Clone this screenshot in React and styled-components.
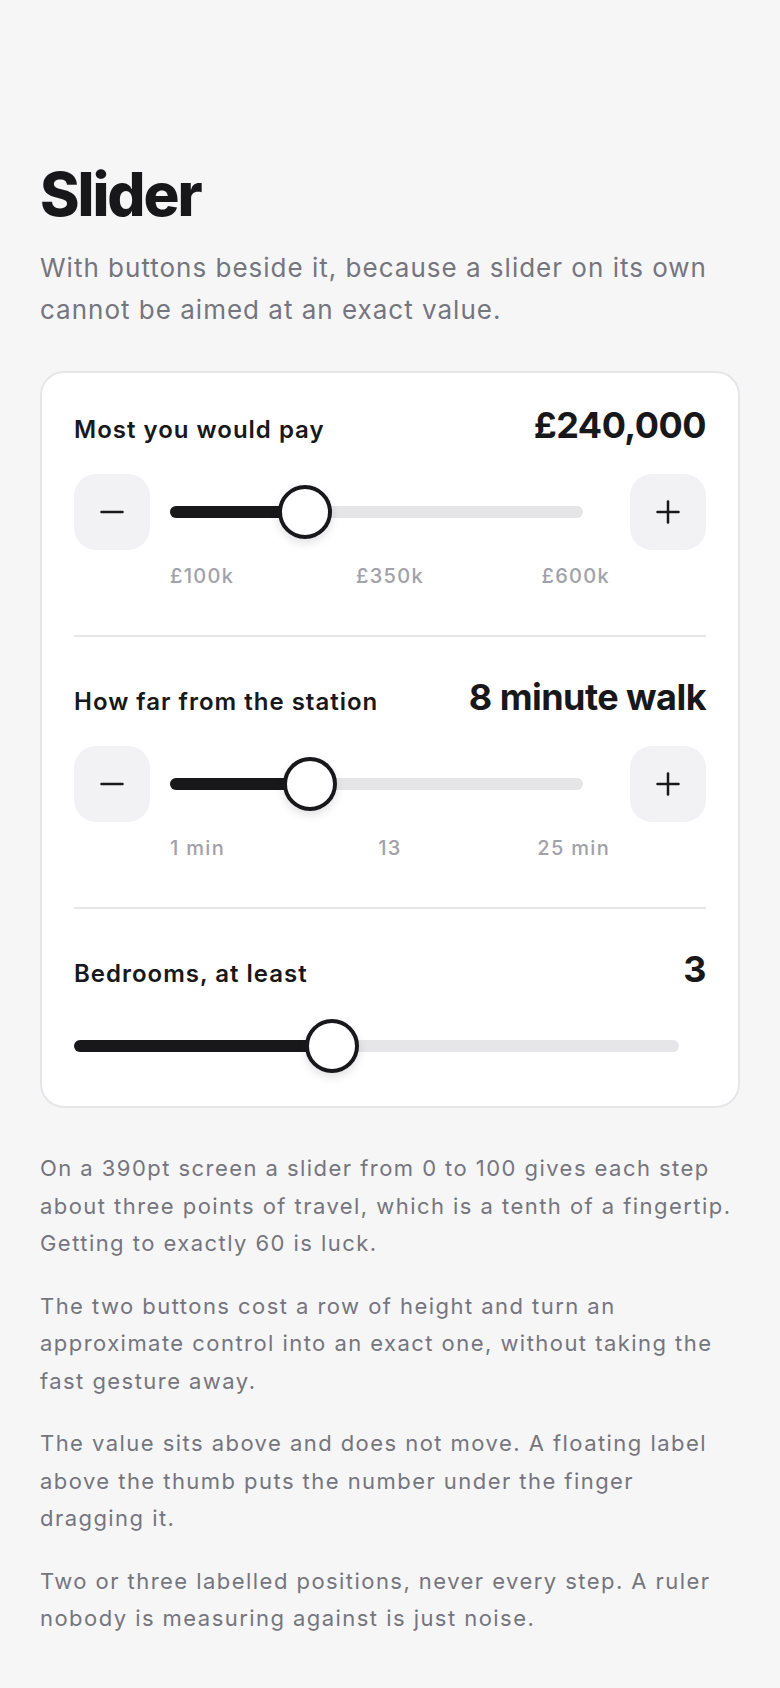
import React from "react";
import styled, { createGlobalStyle } from "styled-components";

const GlobalStyle = createGlobalStyle`
  html, body {
    margin: 0;
    padding: 0;
    background: #f6f6f7;
  }
  body {
    font-family: Inter, "Noto Sans", sans-serif;
    color: #18181b;
    -webkit-font-smoothing: antialiased;
  }
  * {
    box-sizing: border-box;
  }
`;

const Page = styled.main`
  padding: 161px 40px 50px;
`;

const Title = styled.h1`
  margin: 0;
  font-size: 60px;
  line-height: 66px;
  font-weight: 800;
  letter-spacing: -0.035em;
  color: #18181b;
`;

const Lead = styled.p`
  margin: 20px 0 0;
  font-size: 26px;
  line-height: 42px;
  letter-spacing: 1px;
  color: #75757e;
`;

const Card = styled.section`
  margin-top: 40px;
  background: #fff;
  border: 2px solid #e6e6e9;
  border-radius: 24px;
  padding: 32px;
`;

const Group = styled.div`
  padding: 40px 0 47px;
  border-bottom: 2px solid #e6e6e9;
  &:first-child {
    padding-top: 0;
  }
  &:last-child {
    padding-bottom: 0;
    border-bottom: none;
  }
`;

const Head = styled.div`
  display: flex;
  justify-content: space-between;
  align-items: baseline;
  height: 40px;
`;

const Label = styled.span`
  font-size: 24px;
  font-weight: 600;
  letter-spacing: 1px;
  color: #18181b;
`;

const Value = styled.span`
  font-size: 36px;
  line-height: 40px;
  font-weight: 700;
  letter-spacing: -0.015em;
  color: #18181b;
`;

const Controls = styled.div`
  display: flex;
  align-items: center;
  gap: 20px;
  margin-top: 29px;
`;

const StepButton = styled.button`
  flex: none;
  width: 76px;
  height: 76px;
  border: none;
  border-radius: 22px;
  background: #f2f2f4;
  color: #18181b;
  display: flex;
  align-items: center;
  justify-content: center;
  padding: 0;
  cursor: pointer;
`;

const SliderArea = styled.div`
  position: relative;
  flex: 1;
  height: ${props => (props.$tall ? "76px" : "56px")};
  display: flex;
  align-items: center;
`;

const Track = styled.div`
  flex: 1;
  height: 12px;
  margin-right: 27px;
  border-radius: 6px;
  background: #e6e6e9;
`;

const Fill = styled.div`
  position: absolute;
  left: 0;
  top: 50%;
  height: 12px;
  margin-top: -6px;
  border-radius: 6px;
  background: #18181b;
`;

const Thumb = styled.div`
  position: absolute;
  top: 50%;
  width: 54px;
  height: 54px;
  margin: -27px 0 0 -27px;
  border-radius: 50%;
  border: 4px solid #18181b;
  background: #fff;
  box-shadow: 0 4px 10px rgba(0, 0, 0, 0.12);
`;

const Ticks = styled.div`
  display: grid;
  grid-template-columns: 1fr 1fr 1fr;
  margin: 14px 96px 0;
  font-size: 20px;
  line-height: 24px;
  font-weight: 500;
  letter-spacing: 1.3px;
  color: #a1a1aa;
  span:nth-child(2) {
    text-align: center;
  }
  span:nth-child(3) {
    text-align: right;
  }
`;

const Notes = styled.div`
  margin-top: 42px;
  display: flex;
  flex-direction: column;
  gap: 25px;
`;

const Note = styled.p`
  margin: 0;
  font-size: 22px;
  line-height: 37.5px;
  letter-spacing: 1.45px;
  color: #75757e;
`;

const Sign = ({ plus }) => (
  <svg width="24" height="24" viewBox="0 0 24 24" fill="none" stroke="currentColor" strokeWidth="2.5" strokeLinecap="round">
    <line x1="1.5" y1="12" x2="22.5" y2="12" />
    {plus && <line x1="12" y1="1.5" x2="12" y2="22.5" />}
  </svg>
);

const Slider = ({ min, max, value, tall }) => {
  const f = (value - min) / (max - min);
  const pos = `calc(27px + ${f} * (100% - 54px))`;
  return (
    <SliderArea $tall={tall}>
      <Track />
      <Fill style={{ width: pos }} />
      <Thumb style={{ left: pos }} />
    </SliderArea>
  );
};

const filters = [
  {
    label: "Most you would pay",
    value: "£240,000",
    min: 100,
    max: 600,
    current: 240,
    ticks: ["£100k", "£350k", "£600k"],
    buttons: true,
  },
  {
    label: "How far from the station",
    value: "8 minute walk",
    min: 1,
    max: 25,
    current: 8,
    ticks: ["1 min", "13", "25 min"],
    buttons: true,
  },
  {
    label: "Bedrooms, at least",
    value: "3",
    min: 1,
    max: 6,
    current: 3,
  },
];

export default function App() {
  return (
    <>
      <GlobalStyle />
      <Page>
        <Title>Slider</Title>
        <Lead>
          With buttons beside it, because a slider on its own cannot be aimed at
          an exact value.
        </Lead>
        <Card>
          {filters.map(item => (
            <Group key={item.label}>
              <Head>
                <Label>{item.label}</Label>
                <Value>{item.value}</Value>
              </Head>
              {item.buttons ? (
                <>
                  <Controls>
                    <StepButton aria-label="Less">
                      <Sign />
                    </StepButton>
                    <Slider min={item.min} max={item.max} value={item.current} tall />
                    <StepButton aria-label="More">
                      <Sign plus />
                    </StepButton>
                  </Controls>
                  <Ticks>
                    {item.ticks.map(t => (
                      <span key={t}>{t}</span>
                    ))}
                  </Ticks>
                </>
              ) : (
                <Controls>
                  <Slider min={item.min} max={item.max} value={item.current} />
                </Controls>
              )}
            </Group>
          ))}
        </Card>
        <Notes>
          <Note>
            On a 390pt screen a slider from 0 to 100 gives each step about three
            points of travel, which is a tenth of a fingertip. Getting to exactly
            60 is luck.
          </Note>
          <Note>
            The two buttons cost a row of height and turn an approximate control
            into an exact one, without taking the fast gesture away.
          </Note>
          <Note>
            The value sits above and does not move. A floating label above the
            thumb puts the number under the finger dragging it.
          </Note>
          <Note>
            Two or three labelled positions, never every step. A ruler nobody is
            measuring against is just noise.
          </Note>
        </Notes>
      </Page>
    </>
  );
}
